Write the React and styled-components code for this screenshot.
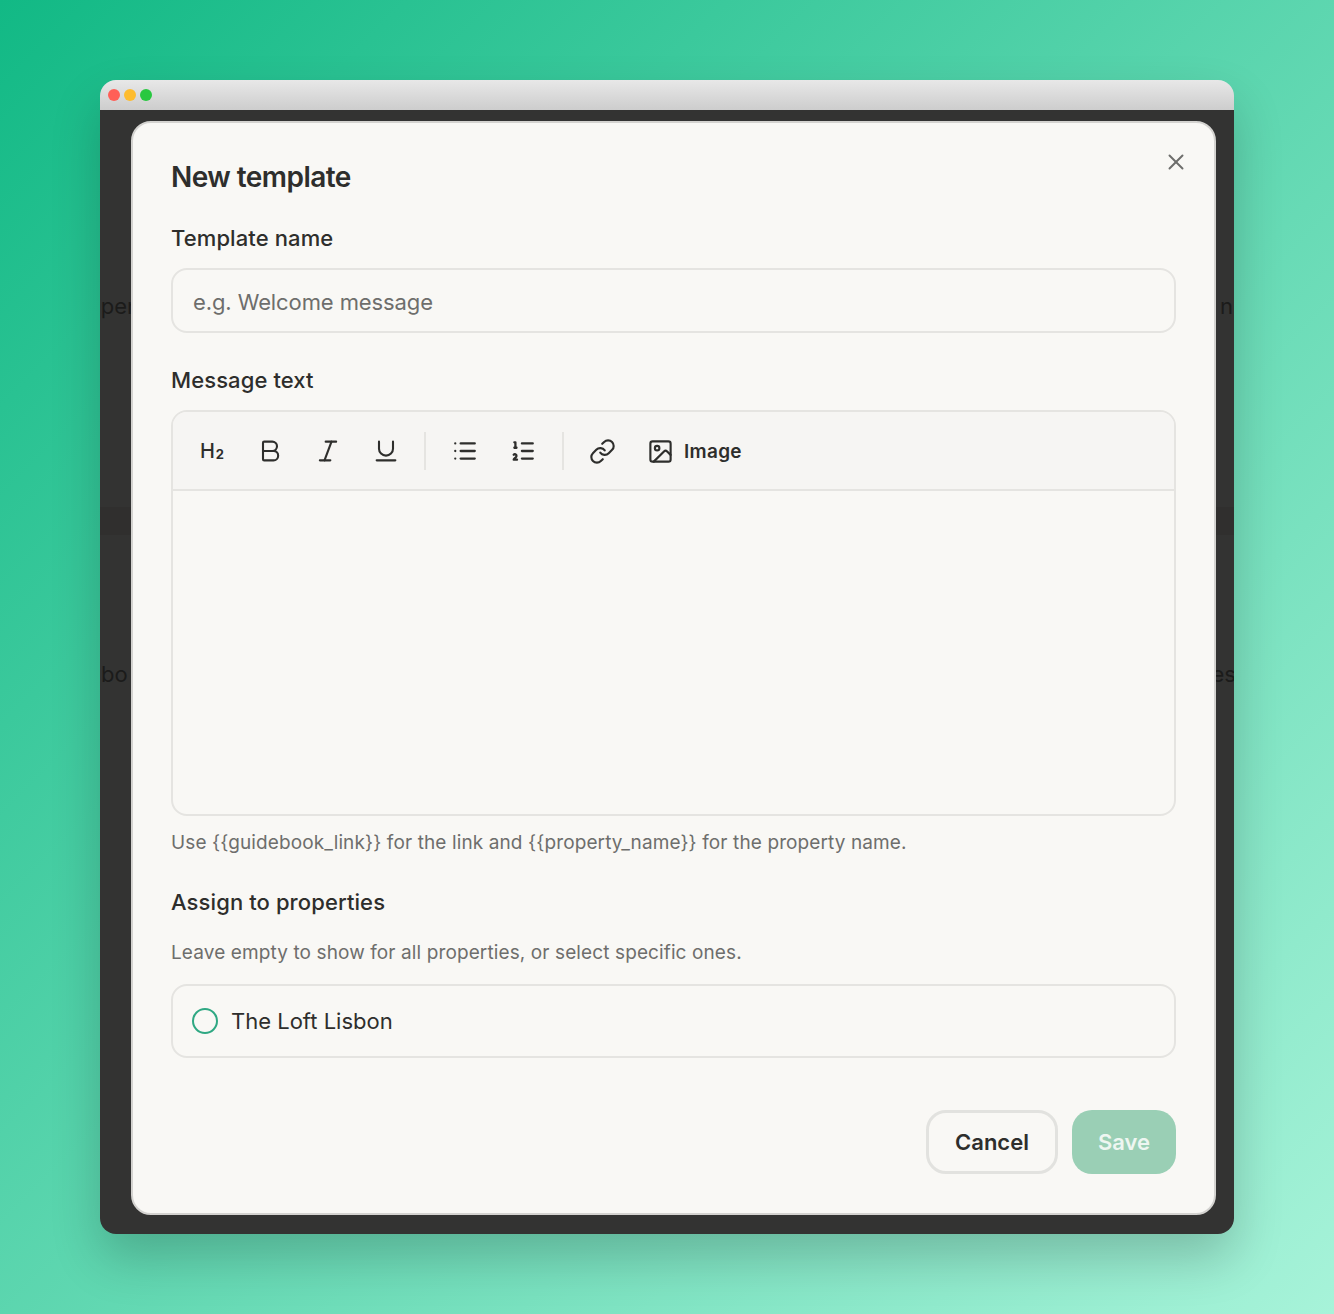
import styled, { createGlobalStyle } from "styled-components";
import { Bold, Italic, Underline, List, ListOrdered, Link, Image, X } from "lucide-react";

const GlobalStyle = createGlobalStyle`
  html, body {
    margin: 0;
    padding: 0;
  }
  * {
    box-sizing: border-box;
  }
  body {
    font-family: Inter, "Liberation Sans", sans-serif;
    color: #2e2e2c;
  }
`;

const App = () => {
  return (
    <Page>
      <GlobalStyle />
      <Browser>
        <TitleBar>
          <Dot color="#ff5f57" />
          <Dot color="#febc2e" />
          <Dot color="#28c840" />
        </TitleBar>

        <Screen>
          <BehindRow top={176}>
            <BehindText offset={-16}>Open</BehindText>
            <BehindText offset={1}>n</BehindText>
          </BehindRow>
          <Band />
          <BehindRow top={119}>
            <BehindText offset={1}>bo</BehindText>
            <BehindText offset={-2}>es</BehindText>
          </BehindRow>

          <Modal>
            <CloseButton type="button">
              <X size={26} strokeWidth={1.8} />
            </CloseButton>
            <Title>New template</Title>

            <Label>Template name</Label>
            <NameInput placeholder="e.g. Welcome message" />

            <Label second>Message text</Label>
            <Editor>
              <Toolbar>
                <HeadingTool>
                  H<small>2</small>
                </HeadingTool>
                <Tool>
                  <Bold size={28} strokeWidth={1.8} />
                </Tool>
                <Tool>
                  <Italic size={28} strokeWidth={1.8} />
                </Tool>
                <Tool>
                  <Underline size={28} strokeWidth={1.8} />
                </Tool>
                <Divider />
                <Tool>
                  <List size={26} strokeWidth={2.1} />
                </Tool>
                <Tool>
                  <ListOrdered size={26} strokeWidth={2.1} />
                </Tool>
                <Divider after />
                <Tool>
                  <Link size={27} strokeWidth={1.9} />
                </Tool>
                <ImageTool>
                  <Image size={27} strokeWidth={1.9} />
                  Image
                </ImageTool>
              </Toolbar>
              <EditorBody />
            </Editor>
            <Hint>Use {"{{guidebook_link}}"} for the link and {"{{property_name}}"} for the property name.</Hint>

            <AssignLabel>Assign to properties</AssignLabel>
            <AssignHint>Leave empty to show for all properties, or select specific ones.</AssignHint>
            <PropertyRow>
              <Radio />
              The Loft Lisbon
            </PropertyRow>

            <Footer>
              <CancelButton type="button">Cancel</CancelButton>
              <SaveButton type="button">Save</SaveButton>
            </Footer>
          </Modal>
        </Screen>
      </Browser>
    </Page>
  );
};

// Styled Components

const Page = styled.div`
  width: 1334px;
  height: 1314px;
  padding: 80px 100px;
  overflow: hidden;
  background: linear-gradient(135deg, #12b985 0%, #a7f3d9 100%);
`;

const Browser = styled.div`
  display: flex;
  flex-direction: column;
  height: 1154px;
  border-radius: 16px;
  overflow: hidden;
  box-shadow: 0 24px 50px rgba(0, 0, 0, 0.2);
`;

const TitleBar = styled.div`
  display: flex;
  align-items: center;
  gap: 4px;
  height: 30px;
  padding-left: 8px;
  background: linear-gradient(#e8e8e8, #cdcdcd);
`;

const Dot = styled.span`
  width: 12px;
  height: 12px;
  border-radius: 50%;
  background: ${(p) => p.color};
`;

const Screen = styled.div`
  position: relative;
  flex: 1;
  overflow: hidden;
  background: #333332;
`;

const BehindRow = styled.div`
  display: flex;
  justify-content: space-between;
  margin-top: ${(p) => p.top}px;
  height: 40px;
  align-items: center;
`;

const BehindText = styled.span`
  margin: 0 ${(p) => p.offset}px;
  font-size: 22px;
  color: #1b1b1a;
`;

const Band = styled.div`
  height: 28px;
  margin-top: 181px;
  background: #302f2e;
`;

const Modal = styled.div`
  position: absolute;
  top: 11px;
  left: 31px;
  width: 1085px;
  height: 1094px;
  padding: 0 38px;
  background: #f9f8f5;
  border: 2px solid #d4d3d0;
  border-radius: 20px;
`;

const CloseButton = styled.button`
  position: absolute;
  top: 26px;
  right: 25px;
  display: flex;
  padding: 0;
  border: none;
  background: none;
  color: #6e6e6c;
`;

const Title = styled.h2`
  margin: 0;
  padding-top: 36px;
  font-size: 28px;
  line-height: 36px;
  font-weight: 600;
  letter-spacing: -0.55px;
`;

const Label = styled.div`
  margin-top: ${(p) => (p.second ? "32px" : "28px")};
  font-size: 22px;
  line-height: 30px;
  font-weight: 450;
  letter-spacing: 0.1px;
`;

const NameInput = styled.input`
  display: block;
  width: 100%;
  height: 65px;
  margin-top: 15px;
  padding: 2px 20px 0;
  border: 2px solid #e5e4e1;
  border-radius: 16px;
  background: transparent;
  font-family: inherit;
  font-size: 22px;
  letter-spacing: -0.1px;
  color: #2e2e2c;

  &::placeholder {
    color: #6e6e6c;
    opacity: 1;
  }
`;

const Editor = styled.div`
  margin-top: 15px;
  border: 2px solid #e5e4e1;
  border-radius: 16px;
  overflow: hidden;
`;

const Toolbar = styled.div`
  display: flex;
  align-items: center;
  height: 79px;
  padding: 1px 0 0 19px;
  gap: 18px;
  background: #f6f5f3;
  border-bottom: 2px solid #e5e4e1;
`;

const Tool = styled.span`
  display: flex;
  align-items: center;
  justify-content: center;
  width: 40px;
  height: 40px;
  color: #2e2e2c;
`;

const HeadingTool = styled(Tool)`
  font-size: 20px;
  font-weight: 500;

  small {
    margin: 5px 0 0 1px;
    font-size: 13px;
    font-weight: 700;
  }
`;

const ImageTool = styled(Tool)`
  width: auto;
  gap: 10px;
  padding: 0 7px;
  font-size: 19px;
  font-weight: 600;
  letter-spacing: 0.3px;
`;

const Divider = styled.span`
  width: 2px;
  height: 38px;
  margin: ${(p) => (p.after ? "0 0 0 1px" : "0 1px 0 0")};
  background: #e5e4e1;
`;

const EditorBody = styled.div`
  height: 323px;
`;

const Hint = styled.p`
  margin: 14px 0 0;
  font-size: 19px;
  line-height: 26px;
  color: #6e6e6c;
  letter-spacing: 0.11px;
`;

const AssignLabel = styled(Label)`
  margin-top: 31px;
`;

const AssignHint = styled(Hint)`
  margin-top: 23px;
`;

const PropertyRow = styled.label`
  display: flex;
  align-items: center;
  gap: 13px;
  height: 74px;
  margin-top: 18px;
  padding: 0 19px;
  border: 2px solid #e5e4e1;
  border-radius: 16px;
  font-size: 22px;
`;

const Radio = styled.span`
  width: 26px;
  height: 26px;
  border: 2px solid #2fa883;
  border-radius: 50%;
`;

const Footer = styled.div`
  display: flex;
  justify-content: flex-end;
  gap: 14px;
  margin-top: 52px;
`;

const CancelButton = styled.button`
  width: 132px;
  height: 64px;
  border: 3px solid #e2e2df;
  border-radius: 20px;
  background: transparent;
  font-family: inherit;
  font-size: 22px;
  font-weight: 600;
  color: #2e2e2c;
`;

const SaveButton = styled.button`
  width: 104px;
  height: 64px;
  border: none;
  border-radius: 20px;
  background: #9acfb5;
  font-family: inherit;
  font-size: 22px;
  font-weight: 600;
  color: #eef6f1;
`;

export default App;
